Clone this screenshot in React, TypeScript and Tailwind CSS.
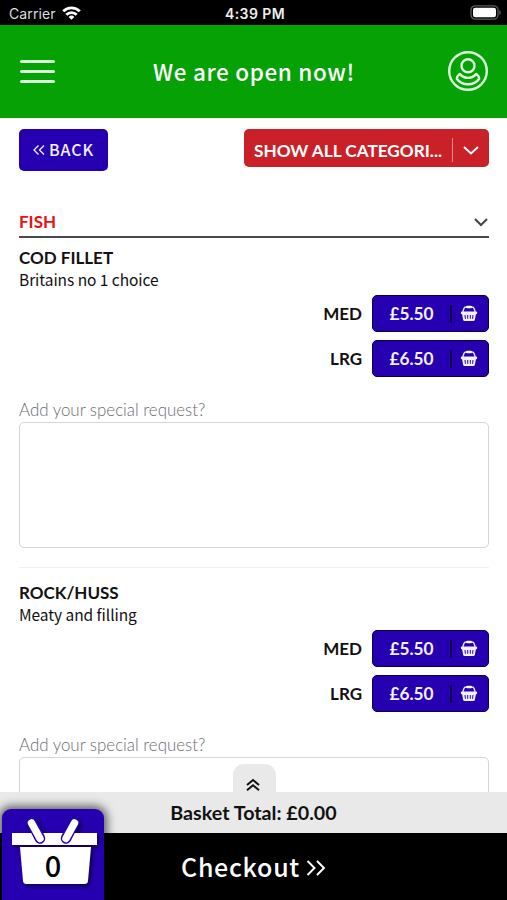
import React from 'react';

interface Size {
  label: string;
  price: string;
}

interface MenuItem {
  name: string;
  description: string;
  sizes: Size[];
}

const SIZES: Size[] = [
  { label: 'MED', price: '£5.50' },
  { label: 'LRG', price: '£6.50' },
];

const ITEMS: MenuItem[] = [
  { name: 'COD FILLET', description: 'Britains no 1 choice', sizes: SIZES },
  { name: 'ROCK/HUSS', description: 'Meaty and filling', sizes: SIZES },
];

function StatusBar() {
  return (
    <div className="grid h-[25px] shrink-0 grid-cols-[1fr_auto_1fr] items-center bg-black pt-[3px] pr-[6px] pl-[9px] font-['Inter',sans-serif] text-white">
      <div className="flex items-center gap-[6px]">
        <span className="text-[14px] leading-none tracking-[0.1px] text-[#dddddd]">Carrier</span>
        <svg width="19" height="14" viewBox="0 0 19 14" fill="none" stroke="#fff" strokeWidth="2.8" className="-mt-[3px]">
          <path d="M1.2 5.2a11.8 11.8 0 0 1 16.6 0" />
          <path d="M4.3 8.8a7.4 7.4 0 0 1 10.4 0" />
          <path d="M9.5 13.8 6.6 10.9a4.1 4.1 0 0 1 5.8 0z" fill="#fff" stroke="none" />
        </svg>
      </div>
      <span className="text-center text-[14px] leading-none font-semibold tracking-[0.4px] text-[#eeeeee]">4:39 PM</span>
      <svg width="31" height="15" viewBox="0 0 31 15" className="-mt-[3px] justify-self-end">
        <rect x="1" y="0.8" width="27" height="13.4" rx="4.2" fill="none" stroke="#5c5c5c" strokeWidth="1.3" />
        <rect x="3" y="2.8" width="23" height="9.4" rx="2.3" fill="#fff" />
        <path d="M29.3 5v5c1-.4 1.5-1.3 1.5-2.5s-.5-2.100-1.500-2.500z" fill="#5c5c5c" />
      </svg>
    </div>
  );
}

function Header() {
  return (
    <header className="flex h-[93px] shrink-0 items-center justify-between bg-[#05a105] pr-[18px] pl-5 text-white">
      <button className="flex w-[40px] flex-col gap-[7px]">
        <span className="h-[3px] w-[35px] rounded-full bg-[#dcf8dc]" />
        <span className="h-[3px] w-[35px] rounded-full bg-[#dcf8dc]" />
        <span className="h-[3px] w-[35px] rounded-full bg-[#dcf8dc]" />
      </button>
      <h1 className="text-[22.5px] leading-none font-medium tracking-[0.65px]">We are open now!</h1>
      <svg width="41" height="41" viewBox="0 0 41 41" fill="none" stroke="#dcf8dc" strokeWidth="2.4">
        <circle cx="20" cy="20" r="18.8" />
        <circle cx="20" cy="14.8" r="6.500" />
        <path d="M11.700 22.900c-1.700 1.300-2.700 2.700-2.900 4.900 2.600 3.800 6.600 5.500 11.200 5.500s8.600-1.700 11.200-5.500c-.2-2.200-1.200-3.600-2.900-4.900-2.300 2.700-5 4-8.300 4s-6-1.300-8.300-4z" strokeLinejoin="round" />
      </svg>
    </header>
  );
}

function BasketIcon() {
  return (
    <svg width="18" height="17" viewBox="0 0 18 17" fill="none">
      <path d="M2.800 7 3.800 3.700Q4.300 2 6.200 2h5.600q1.900 0 2.400 1.700L15.200 7" stroke="#e4defa" strokeWidth="1.400" />
      <rect x="6" y="0.700" width="6" height="2.600" rx="1.200" fill="#fff" />
      <rect x="0.800" y="6.600" width="16.400" height="2.700" rx="1.200" fill="#f4f1ff" />
      <path d="M2 8.500h14l-1.100 6.300q-.3 1.200-1.500 1.200H4.600q-1.200 0-1.500-1.200z" fill="#f4f1ff" />
      <path d="M5 10l.4 3.800M7.700 10v3.800M10.300 10v3.800M13 10l-.4 3.800" stroke="#2600b0" strokeWidth="1" />
    </svg>
  );
}

function PriceRow({ size }: { size: Size }) {
  return (
    <div className="flex items-center justify-end gap-[10px]">
      <span className="text-[17px] leading-none font-bold">{size.label}</span>
      <button className="flex h-[37px] w-[117px] items-center rounded-[5px] border-[1.5px] border-[#0c0048] bg-[#2600b0] text-[#f2efff]">
        <span className="w-[77px] text-center text-[17.3px] leading-none font-bold">{size.price}</span>
        <span className="h-[18px] w-[1.5px] bg-[#0c0048]" />
        <span className="ml-[8px]">
          <BasketIcon />
        </span>
      </button>
    </div>
  );
}

function MenuEntry({ item }: { item: MenuItem }) {
  return (
    <article className="mb-[15px] border-b border-[#f2f2f2] pb-[19px] font-['Lato',sans-serif] text-[#111111]">
      <h3 className="h-5 text-[17px] leading-[19px] font-bold">{item.name}</h3>
      <p className="h-[27px] font-['Noto_Sans_CJK_SC',sans-serif] text-[15.5px] leading-[23px] tracking-[-0.05px]">{item.description}</p>
      <div className="flex flex-col gap-2">
        {item.sizes.map((s) => (
          <PriceRow key={s.label} size={s} />
        ))}
      </div>
      <label className="mt-[23px] block h-[22px] text-[16.9px] leading-[20px] font-light text-[#6c6c72]">
        Add your special request?
      </label>
      <textarea className="block h-[126px] w-full resize-none rounded-[5px] border-[1.5px] border-[#d6d6d6] bg-white" />
    </article>
  );
}

function Footer() {
  return (
    <footer className="relative shrink-0">
      <button className="absolute -top-7 left-[233px] flex h-7 w-[43px] items-center justify-center rounded-t-[11px] bg-[#e9e9e9] pt-[13px] pr-[3px]">
        <svg width="14" height="13" viewBox="0 0 14 13" fill="none" stroke="#111" strokeWidth="2">
          <path d="M1 7l6-5 6 5M1 12.2l6-5 6 5" />
        </svg>
      </button>
      <div className="flex h-[41px] items-center justify-center bg-[#e9e9e9] pt-[1px] font-['Lato',sans-serif] text-[19.7px] leading-none font-bold text-[#111111]">
        Basket Total: £0.00
      </div>
      <div className="flex h-[67px] items-center justify-center gap-[6px] bg-black text-white">
        <span className="text-[25px] leading-none font-medium tracking-[0.7px]">Checkout</span>
        <svg width="20" height="16" viewBox="0 0 20 16" fill="none" stroke="#fff" strokeWidth="1.9" className="mt-[2px]">
          <path d="M1.500 1l7 7-7 7M11 1l7 7-7 7" />
        </svg>
      </div>
      <div className="absolute bottom-0 left-[2px] h-[91px] w-[102px] rounded-t-[9px] bg-[#2600b0] shadow-[0_0_10px_3px_rgba(0,0,0,0.6)]">
        <svg width="102" height="91" viewBox="0 0 102 91" className="block drop-shadow-[2px_2px_2px_rgba(0,0,0,0.6)]">
          <rect x="10" y="24" width="85" height="12" fill="#fff" />
          <path d="M18 38h71l-3 34q-.3 3-3.300 3H24.300q-3 0-3.300-3z" fill="#fff" />
          <g strokeLinecap="round">
            <path d="M30 14l8 15.500M72 14l-8 15.500" stroke="#2600b0" strokeWidth="10.500" />
            <path d="M29.500 14l8.500 15.500M72.500 14l-8.500 15.500" stroke="#fff" strokeWidth="7.500" />
          </g>
        </svg>
        <span className="absolute top-[38px] left-0 w-[102px] text-center text-[29px] leading-[34px] font-medium text-black">0</span>
      </div>
    </footer>
  );
}

export default function App() {
  return (
    <div className="flex h-[900px] w-[507px] flex-col overflow-hidden bg-white font-['Noto_Sans_CJK_SC',sans-serif]">
      <StatusBar />
      <Header />
      <main className="min-h-0 flex-1 overflow-hidden pt-[11px] pr-[18px] pl-[19px]">
        <div className="flex items-start justify-between">
          <button className="flex h-[42px] w-[89px] items-center justify-center gap-[4px] rounded-[5px] bg-[#2600b0] text-[#f2efff]">
            <svg width="12" height="10" viewBox="0 0 12 10" fill="none" stroke="#f2efff" strokeWidth="1.3">
              <path d="M5.500 .5L1 5l4.500 4.500M11 .5L6.500 5l4.500 4.500" />
            </svg>
            <span className="-mt-[2px] text-[16px] leading-none font-medium tracking-[0.9px]">BACK</span>
          </button>
          <button className="flex h-[38px] w-[245px] items-center rounded-[5px] bg-[#ca2128] pt-[4px] pl-[10px] font-['Lato',sans-serif] text-white">
            <span className="w-[198px] pt-[2px] text-left text-[17.2px] leading-none font-bold whitespace-nowrap">SHOW ALL CATEGORI...</span>
            <span className="h-6 w-px bg-[#e58d91]" />
            <svg width="16" height="9" viewBox="0 0 16 9" fill="none" stroke="#fff" strokeWidth="2" className="ml-[10px]">
              <path d="M1 1l7 6.500L15 1" />
            </svg>
          </button>
        </div>
        <div className="mt-[36px] flex h-[31px] items-center justify-between border-b-2 border-[#4a4a4a]">
          <h2 className="font-['Lato',sans-serif] text-[17px] leading-none font-bold text-[#e81212]">FISH</h2>
          <svg width="14" height="9" viewBox="0 0 14 9" fill="none" stroke="#444" strokeWidth="2" className="mt-[2px] mr-px">
            <path d="M1 1l6 6 6-6" />
          </svg>
        </div>
        <div className="pt-[10px]">
          {ITEMS.map((item) => (
            <MenuEntry key={item.name} item={item} />
          ))}
        </div>
      </main>
      <Footer />
    </div>
  );
}
